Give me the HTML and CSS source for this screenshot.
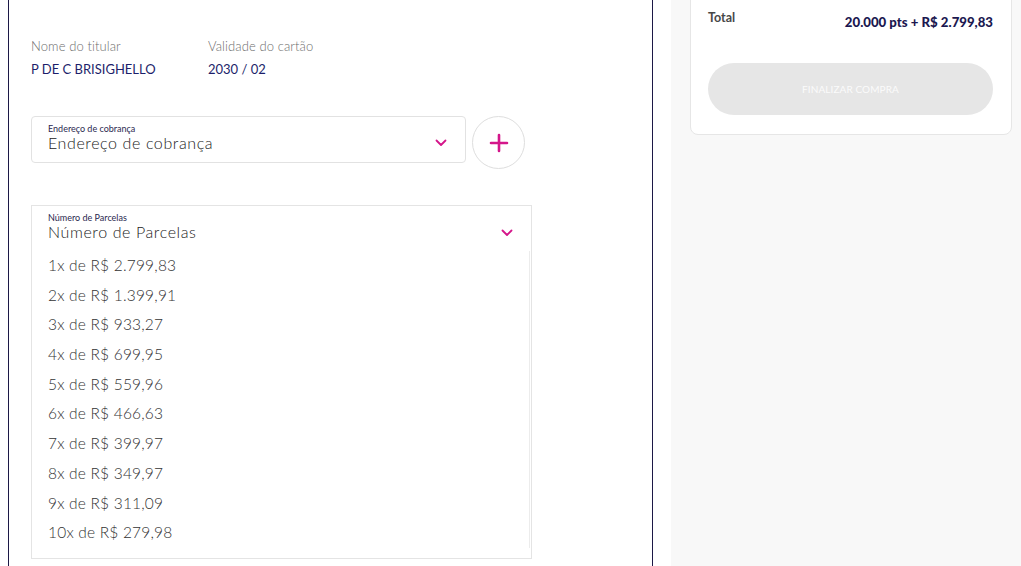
FILE: index.html
```html
<!DOCTYPE html>
<html lang="pt-BR">
<head>
<meta charset="utf-8">
<title>Pagamento</title>
<link rel="stylesheet" href="styles.css">
</head>
<body>
<div class="page">
  <main class="left">
    <div class="card-info">
      <div class="info">
        <div class="info-label">Nome do titular</div>
        <div class="info-value">P DE C BRISIGHELLO</div>
      </div>
      <div class="info">
        <div class="info-label">Validade do cartão</div>
        <div class="info-value">2030 / 02</div>
      </div>
    </div>

    <div class="address-row">
      <div class="select address">
        <div class="select-text">
          <span class="select-label">Endereço de cobrança</span>
          <span class="select-value">Endereço de cobrança</span>
        </div>
        <svg class="chev" width="12" height="8" viewBox="0 0 12 8"><path d="M1.5 1.5 L6 6 L10.5 1.5" fill="none" stroke="#d4168a" stroke-width="1.8" stroke-linecap="round" stroke-linejoin="round"/></svg>
      </div>
      <button class="add-btn" type="button" aria-label="Adicionar endereço">
        <svg width="20" height="20" viewBox="0 0 20 20"><path d="M10 2 V18 M2 10 H18" stroke="#d4168a" stroke-width="2.6" stroke-linecap="round"/></svg>
      </button>
    </div>

    <div class="select parcelas">
      <div class="parcelas-head">
        <div class="select-text">
          <span class="select-label">Número de Parcelas</span>
          <span class="select-value">Número de Parcelas</span>
        </div>
        <svg class="chev" width="12" height="8" viewBox="0 0 12 8"><path d="M1.5 1.5 L6 6 L10.5 1.5" fill="none" stroke="#d4168a" stroke-width="1.8" stroke-linecap="round" stroke-linejoin="round"/></svg>
      </div>
      <ul class="options">
        <li>1x de R$ 2.799,83</li>
        <li>2x de R$ 1.399,91</li>
        <li>3x de R$ 933,27</li>
        <li>4x de R$ 699,95</li>
        <li>5x de R$ 559,96</li>
        <li>6x de R$ 466,63</li>
        <li>7x de R$ 399,97</li>
        <li>8x de R$ 349,97</li>
        <li>9x de R$ 311,09</li>
        <li>10x de R$ 279,98</li>
      </ul>
    </div>
  </main>

  <aside class="right">
    <div class="summary">
      <div class="total-row">
        <span class="total-label">Total</span>
        <span class="total-value">20.000 pts + R$ 2.799,83</span>
      </div>
      <button class="finish" type="button" disabled>FINALIZAR COMPRA</button>
    </div>
  </aside>
</div>
</body>
</html>
```

FILE: styles.css
```css
* { box-sizing: border-box; }

html, body {
  margin: 0;
  padding: 0;
  height: 100%;
  overflow: hidden;
  background: #ffffff;
  font-family: Lato, "Noto Sans", "Liberation Sans", sans-serif;
}

.page {
  display: flex;
  height: 566px;
}

.left {
  margin-left: 8px;
  width: 645px;
  border-left: 1px solid #1c1846;
  border-right: 1px solid #1c1846;
  padding: 38px 0 0 22px;
  flex: none;
}

.card-info {
  display: flex;
}

.info { width: 177px; }

.info-label {
  font-size: 13px;
  line-height: 16px;
  color: #6e6e6e;
  font-weight: 300;
  letter-spacing: 0.1px;
}

.info-value {
  margin-top: 7px;
  font-size: 13px;
  line-height: 16px;
  color: #1d1f6b;
}

.address-row {
  display: flex;
  margin-top: 39px;
  gap: 6px;
  align-items: flex-start;
}

.select {
  border: 1px solid #e2e2e2;
  background: #fff;
}

.address {
  width: 435px;
  height: 47px;
  border-radius: 4px;
  display: flex;
  align-items: center;
  padding: 0 18px 0 16px;
}

.address .select-text { margin-top: -3px; }

.select-text {
  flex: 1;
  display: flex;
  flex-direction: column;
}

.select-label {
  font-size: 9px;
  line-height: 10px;
  color: #2b2850;
}

.select-value {
  font-size: 16px;
  line-height: 18px;
  color: #222222;
  font-weight: 300;
  letter-spacing: 0.6px;
}

.chev { flex: none; display: block; }

.address .chev { margin-top: 6px; }

.add-btn {
  width: 53px;
  height: 53px;
  border-radius: 50%;
  border: 1px solid #dedede;
  background: #fff;
  padding: 0;
  display: flex;
  align-items: center;
  justify-content: center;
}

.parcelas {
  margin-top: 36px;
  width: 501px;
  height: 354px;
  border-color: #e4e4e4;
}

.parcelas-head {
  display: flex;
  align-items: center;
  height: 45px;
  padding: 0 18px 0 16px;
}

.parcelas-head .select-text { margin-top: -4px; }
.parcelas-head .chev { margin-top: 8px; }

.options {
  list-style: none;
  margin: 0 1px 0 0;
  padding: 0 0 0 16px;
  border-right: 1px solid #ececec;
}

.options li {
  height: 29.7px;
  line-height: 29.7px;
  font-size: 15.5px;
  color: #333333;
  font-weight: 300;
  letter-spacing: 0.2px;
}

.right {
  margin-left: 18px;
  flex: 1;
  background: #f8f8f8;
  padding-left: 19px;
  padding-right: 10px;
}

.summary {
  margin-top: -30px;
  background: #fff;
  border: 1px solid #e6e6e6;
  border-radius: 8px;
  padding: 39px 18px 19px 17px;
}

.total-row {
  display: flex;
  justify-content: space-between;
  align-items: flex-start;
}

.total-label {
  font-size: 12.5px;
  font-weight: 700;
  color: #474747;
  line-height: 15px;
}

.total-value {
  font-size: 13.2px;
  font-weight: 900;
  color: #1b1850;
  line-height: 15px;
  margin-top: 5px;
}

.finish {
  display: block;
  margin-top: 33px;
  width: 285px;
  height: 52px;
  border: none;
  border-radius: 26px;
  background: #e6e6e6;
  color: #fbfbfb;
  font-family: Lato, "Noto Sans", sans-serif;
  font-size: 10px;
  letter-spacing: 0.1px;
}
```
